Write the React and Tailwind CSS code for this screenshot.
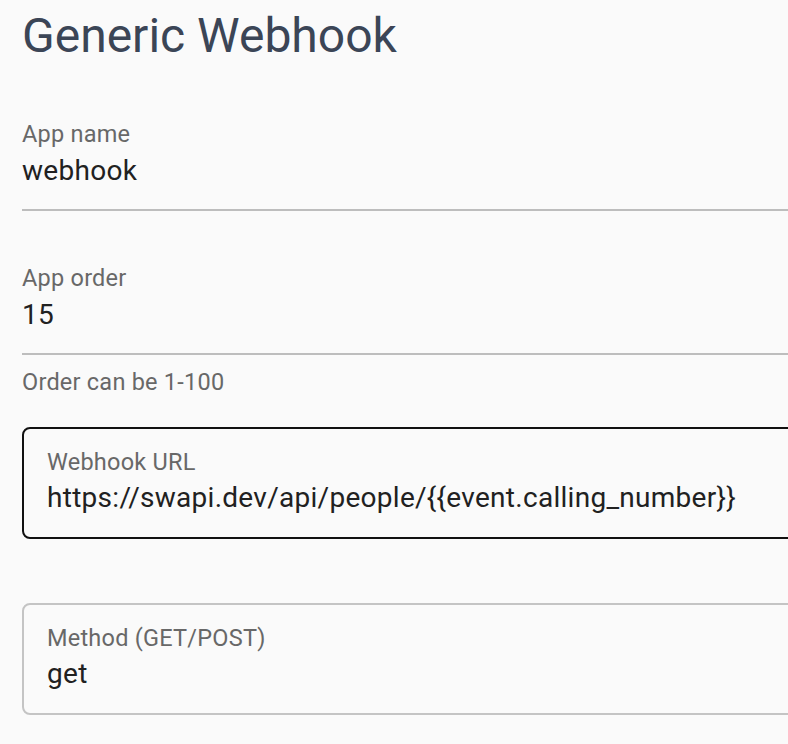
import React from 'react';

const font = { fontFamily: 'Roboto, "Liberation Sans", sans-serif' };

const UnderlineField = ({ label, value, helper }) => (
  <div className="w-[900px]">
    <div className="border-b-2 border-[#bdbdbd] pb-[22px]">
      <div className="text-[23.5px] leading-[28px] tracking-[0.01em] text-[#686868]">{label}</div>
      <div className="mt-[7px] text-[28px] leading-[32px] tracking-[0.01em] text-[#212121]">{value}</div>
    </div>
    {helper && (
      <div className="mt-[13px] text-[23.5px] leading-[28px] tracking-[0.01em] text-[#686868]">{helper}</div>
    )}
  </div>
);

const OutlinedField = ({ label, value, focused }) => (
  <div
    className={
      'w-[900px] h-[112px] rounded-[8px] pl-[23px] pt-[19px] ' +
      (focused ? 'border-2 border-[#111111]' : 'border-2 border-[#c4c4c4]')
    }
  >
    <div className="text-[23.5px] leading-[28px] tracking-[0.01em] text-[#686868]">{label}</div>
    <div className="mt-[6px] text-[28px] leading-[32px] tracking-[0.01em] text-[#212121]">{value}</div>
  </div>
);

export default function App() {
  return (
    <div className="w-[788px] h-[744px] overflow-hidden bg-[#fafafa] pl-[22px]" style={font}>
      <h1 className="mt-[8px] text-[48px] leading-[56px] text-[#3b4556] font-normal">Generic Webhook</h1>
      <div className="mt-[56px]">
        <UnderlineField label="App name" value="webhook" />
      </div>
      <div className="mt-[53px]">
        <UnderlineField label="App order" value="15" helper="Order can be 1-100" />
      </div>
      <div className="mt-[31px]">
        <OutlinedField label="Webhook URL" value="https://swapi.dev/api/people/{{event.calling_number}}" focused />
      </div>
      <div className="mt-[64px]">
        <OutlinedField label="Method (GET/POST)" value="get" />
      </div>
    </div>
  );
}
